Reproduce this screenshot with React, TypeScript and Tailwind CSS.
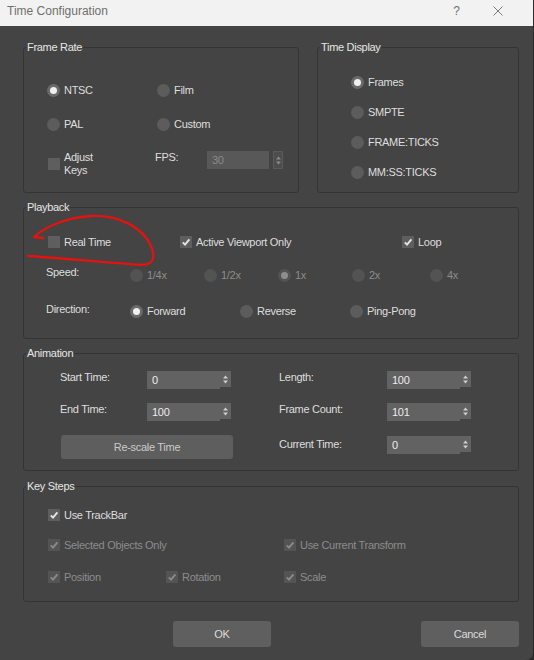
import type { ReactNode } from 'react';

const Group = ({
  title,
  className,
  children,
}: {
  title: string;
  className: string;
  children: ReactNode;
}) => (
  <div className={`relative rounded-[3px] border border-[#343434] ${className}`}>
    <span className="absolute -top-[7px] left-[2px] bg-[#444444] px-[1px] text-[#e6e6e6]">
      {title}
    </span>
    {children}
  </div>
);

const Check = ({
  checked = false,
  disabled = false,
  className = '',
}: {
  checked?: boolean;
  disabled?: boolean;
  className?: string;
}) => (
  <span
    className={`flex h-[12px] w-[12px] shrink-0 items-center justify-center ${
      disabled ? 'bg-[#545454]' : 'bg-[#5e5e5e]'
    } ${className}`}
  >
    {checked && (
      <svg width="12" height="12" viewBox="0 0 12 12">
        <path
          d="M2.8 6.3 L5 8.7 L9.4 3.3"
          fill="none"
          stroke={disabled ? '#8a8a8a' : '#e4e4e4'}
          strokeWidth="1.9"
          strokeLinejoin="round"
        />
      </svg>
    )}
  </span>
);

const CheckLabel = ({
  label,
  checked,
  disabled,
}: {
  label: string;
  checked?: boolean;
  disabled?: boolean;
}) => (
  <span className="flex items-center gap-[4px]">
    <Check checked={checked} disabled={disabled} />
    <span className={disabled ? 'text-[#8c8c8c]' : ''}>{label}</span>
  </span>
);

const Radio = ({
  label,
  checked = false,
  disabled = false,
}: {
  label: string;
  checked?: boolean;
  disabled?: boolean;
}) => (
  <span className="flex items-center gap-[4px]">
    <span
      className={`flex h-[13px] w-[13px] shrink-0 items-center justify-center rounded-full ${
        disabled
          ? 'bg-[#535353]'
          : checked
            ? 'bg-[#6a6a6a]'
            : 'bg-[#5c5c5c]'
      }`}
    >
      {checked && (
        <span
          className={`h-[7px] w-[7px] rounded-full ${
            disabled ? 'bg-[#8e8e8e]' : 'bg-[#f0f0f0]'
          }`}
        />
      )}
    </span>
    <span className={disabled ? 'text-[#8c8c8c]' : ''}>{label}</span>
  </span>
);

const Arrows = ({ color }: { color: string }) => (
  <svg width="7" height="11" viewBox="0 0 7 11">
    <path d="M1 4.5 L3.5 1.5 L6 4.5 Z" fill={color} />
    <path d="M1 6.5 L3.5 9.5 L6 6.5 Z" fill={color} />
  </svg>
);

const Spin = ({ value }: { value: string }) => (
  <div className="flex items-start">
    <div className="flex h-[18px] w-[73px] items-center bg-[#626262] pl-[5px] text-[#ececec]">
      {value}
    </div>
    <div className="flex h-[16px] w-[11px] items-center justify-center bg-[#626262]">
      <Arrows color="#cfcfcf" />
    </div>
  </div>
);

export default function App() {
  return (
    <div className="relative h-[660px] w-[534px] overflow-hidden bg-[#2a2a2a] font-['Liberation_Sans',Arial,sans-serif] text-[11px] leading-[13px] tracking-[-0.3px] text-[#dedede]">
      <div className="flex h-[660px] w-[533px] flex-col rounded-br-[7px] bg-[#444444]">
        {/* title bar */}
        <div className="flex h-[26px] shrink-0 items-start bg-[#f2f2f2] pl-[7px] pt-[4px] text-[12px] leading-[14px] tracking-normal text-[#6f6f6f]">
          <span>Time Configuration</span>
          <span className="ml-auto">?</span>
          <svg className="ml-[33px] mr-[30px] mt-[2px]" width="10" height="10" viewBox="0 0 10 10">
            <path d="M0.5 0.5 L9.5 9.5 M9.5 0.5 L0.5 9.5" stroke="#7a7a7a" strokeWidth="1" />
          </svg>
        </div>

        <div className="flex flex-col pl-[23px] pr-[14px] pt-[21px]">
          <div className="flex gap-[18px]">
            <Group title="Frame Rate" className="h-[146px] w-[276px]">
              <div className="flex flex-col pl-[23px] pt-[25px]">
                <div className="flex h-[34px] items-center">
                  <div className="w-[110px]">
                    <Radio label="NTSC" checked />
                  </div>
                  <Radio label="Film" />
                </div>
                <div className="flex h-[34px] items-center">
                  <div className="w-[110px]">
                    <Radio label="PAL" />
                  </div>
                  <Radio label="Custom" />
                </div>
                <div className="mt-[10px] flex items-start">
                  <div className="flex w-[108px] items-center gap-[4px]">
                    <Check className="ml-[1px]" />
                    <div>
                      Adjust
                      <br />
                      Keys
                    </div>
                  </div>
                  <span className="w-[52px]">FPS:</span>
                  <div className="flex h-[18px] w-[62px] items-center bg-[#585858] pl-[5px] text-[#8a8a8a]">
                    30
                  </div>
                  <div className="ml-[4px] flex h-[18px] w-[10px] items-center justify-center border border-[#5a5a5a] bg-[#4d4d4d]">
                    <Arrows color="#8a8a8a" />
                  </div>
                </div>
              </div>
            </Group>

            <Group title="Time Display" className="h-[146px] w-[202px]">
              <div className="flex flex-col pl-[33px] pt-[19px]">
                <div className="flex h-[30px] items-center">
                  <Radio label="Frames" checked />
                </div>
                <div className="flex h-[30px] items-center">
                  <Radio label="SMPTE" />
                </div>
                <div className="flex h-[30px] items-center">
                  <Radio label="FRAME:TICKS" />
                </div>
                <div className="flex h-[30px] items-center">
                  <Radio label="MM:SS:TICKS" />
                </div>
              </div>
            </Group>
          </div>

          <Group title="Playback" className="mt-[14px] h-[132px]">
            <div className="flex flex-col pl-[24px] pt-[21px]">
              <div className="flex h-[26px] items-center">
                <div className="w-[132px]">
                  <CheckLabel label="Real Time" />
                </div>
                <div className="w-[222px]">
                  <CheckLabel label="Active Viewport Only" checked />
                </div>
                <CheckLabel label="Loop" checked />
              </div>
              <div className="flex h-[40px] items-center">
                <span className="-ml-[2px] mb-[6px] w-[84px]">Speed:</span>
                <div className="w-[74px]">
                  <Radio label="1/4x" disabled />
                </div>
                <div className="w-[74px]">
                  <Radio label="1/2x" disabled />
                </div>
                <div className="w-[74px]">
                  <Radio label="1x" checked disabled />
                </div>
                <div className="w-[78px]">
                  <Radio label="2x" disabled />
                </div>
                <Radio label="4x" disabled />
              </div>
              <div className="flex h-[32px] items-center">
                <span className="-ml-[2px] mb-[4px] w-[84px]">Direction:</span>
                <div className="w-[110px]">
                  <Radio label="Forward" checked />
                </div>
                <div className="w-[110px]">
                  <Radio label="Reverse" />
                </div>
                <Radio label="Ping-Pong" />
              </div>
            </div>
          </Group>

          <Group title="Animation" className="mt-[14px] h-[118px]">
            <div className="flex flex-col pl-[36px] pt-[17px]">
              <div className="flex items-start">
                <span className="w-[87px]">Start Time:</span>
                <Spin value="0" />
                <span className="ml-[48px] w-[108px]">Length:</span>
                <Spin value="100" />
              </div>
              <div className="mt-[14px] flex items-start">
                <span className="w-[87px]">End Time:</span>
                <Spin value="100" />
                <span className="ml-[48px] w-[108px]">Frame Count:</span>
                <Spin value="101" />
              </div>
              <div className="mt-[14px] flex items-start">
                <button
                  type="button"
                  className="ml-[1px] flex h-[24px] w-[172px] items-center justify-center rounded-[3px] bg-[#5e5e5e] text-[#cacaca]"
                >
                  Re-scale Time
                </button>
                <span className="ml-[46px] mt-[3px] w-[108px]">Current Time:</span>
                <div className="mt-[1px]">
                  <Spin value="0" />
                </div>
              </div>
            </div>
          </Group>

          <Group title="Key Steps" className="mt-[15px] h-[116px]">
            <div className="flex flex-col pl-[24px] pt-[13px]">
              <div className="flex h-[30px] items-center">
                <CheckLabel label="Use TrackBar" checked />
              </div>
              <div className="flex h-[30px] items-center">
                <div className="w-[236px]">
                  <CheckLabel label="Selected Objects Only" checked disabled />
                </div>
                <CheckLabel label="Use Current Transform" checked disabled />
              </div>
              <div className="flex h-[34px] items-center">
                <div className="w-[118px]">
                  <CheckLabel label="Position" checked disabled />
                </div>
                <div className="w-[118px]">
                  <CheckLabel label="Rotation" checked disabled />
                </div>
                <CheckLabel label="Scale" checked disabled />
              </div>
            </div>
          </Group>

          <div className="mt-[19px] flex">
            <button
              type="button"
              className="ml-[150px] flex h-[26px] w-[98px] items-center justify-center rounded-[3px] bg-[#5f5f5f] text-[#dcdcdc]"
            >
              OK
            </button>
            <button
              type="button"
              className="ml-auto flex h-[26px] w-[98px] items-center justify-center rounded-[3px] bg-[#5f5f5f] text-[#dcdcdc]"
            >
              Cancel
            </button>
          </div>
        </div>
      </div>

      {/* red hand-drawn annotation */}
      <svg
        className="pointer-events-none absolute left-0 top-0"
        width="534"
        height="660"
        viewBox="0 0 534 660"
      >
        <path
          d="M43 238 L34 237 C46 226 68 217 92 216 C120 215 143 228 151 246 C156 258 153 265 141 265 C110 263 62 258 28 256"
          fill="none"
          stroke="#e3130f"
          strokeWidth="2.3"
          strokeLinecap="round"
          strokeLinejoin="round"
        />
      </svg>
    </div>
  );
}
